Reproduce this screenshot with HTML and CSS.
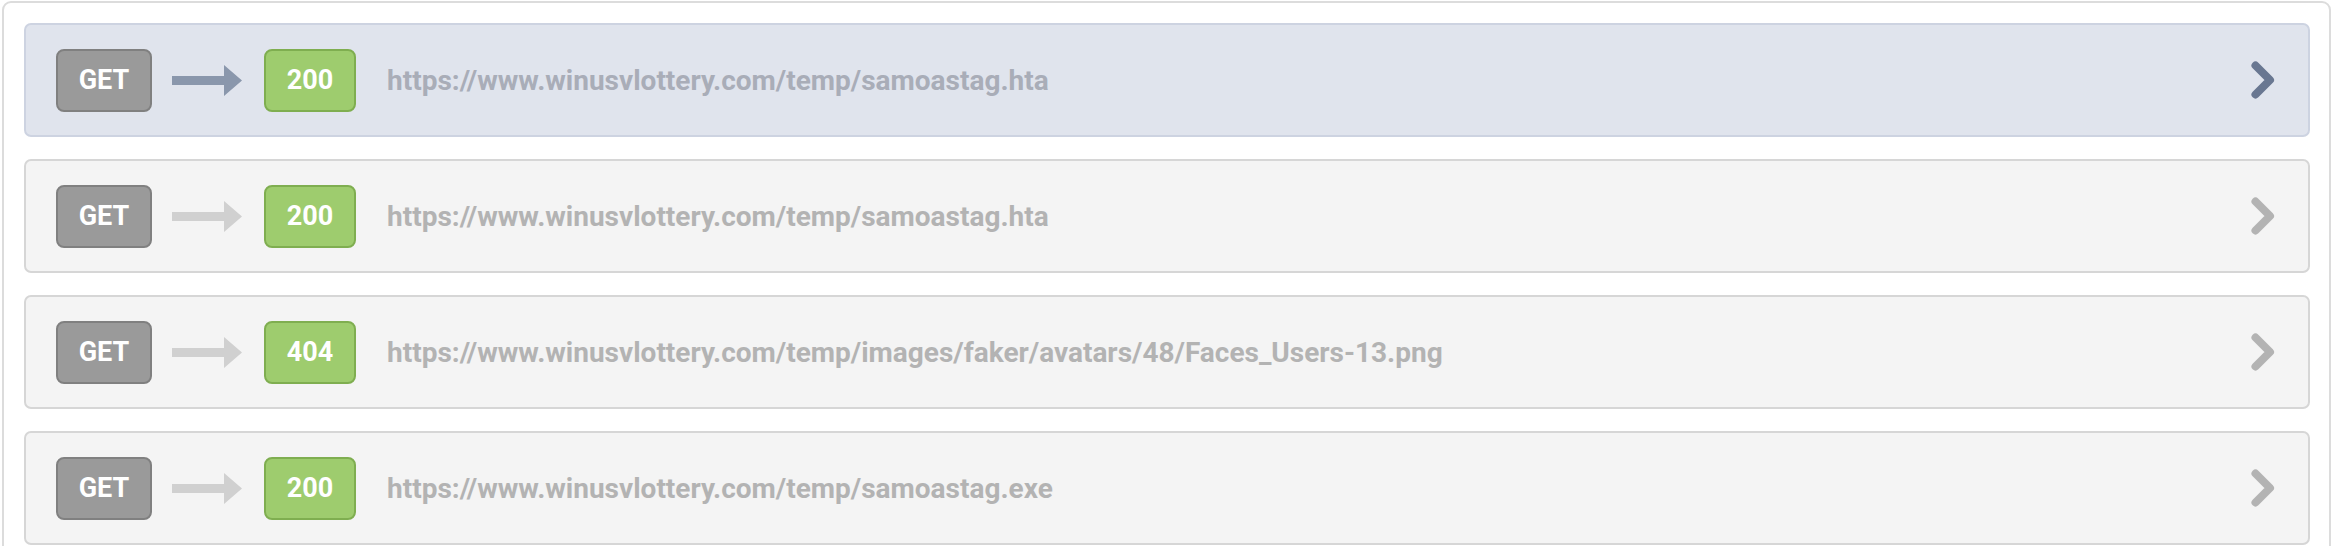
FILE: index.html
```html
<!DOCTYPE html>
<html>
<head>
<meta charset="utf-8">
<link rel="stylesheet" href="styles.css">
</head>
<body>
<div class="panel">
  <div class="row active">
    <span class="method">GET</span>
    <svg class="arrow" width="70" height="31" viewBox="0 0 70 31"><path d="M0 11h52V0l18 15.5L52 31V20H0z"/></svg>
    <span class="status">200</span>
    <span class="url">https://www.winusvlottery.com/temp/samoastag.hta</span>
    <svg class="chev" width="24" height="38" viewBox="0 0 24 38"><path d="M4.5 4.5L19 19L4.5 33.5" fill="none" stroke-width="8" stroke-linecap="round" stroke-linejoin="round"/></svg>
  </div>
  <div class="row">
    <span class="method">GET</span>
    <svg class="arrow" width="70" height="31" viewBox="0 0 70 31"><path d="M0 11h52V0l18 15.5L52 31V20H0z"/></svg>
    <span class="status">200</span>
    <span class="url">https://www.winusvlottery.com/temp/samoastag.hta</span>
    <svg class="chev" width="24" height="38" viewBox="0 0 24 38"><path d="M4.5 4.5L19 19L4.5 33.5" fill="none" stroke-width="8" stroke-linecap="round" stroke-linejoin="round"/></svg>
  </div>
  <div class="row">
    <span class="method">GET</span>
    <svg class="arrow" width="70" height="31" viewBox="0 0 70 31"><path d="M0 11h52V0l18 15.5L52 31V20H0z"/></svg>
    <span class="status">404</span>
    <span class="url">https://www.winusvlottery.com/temp/images/faker/avatars/48/Faces_Users-13.png</span>
    <svg class="chev" width="24" height="38" viewBox="0 0 24 38"><path d="M4.5 4.5L19 19L4.5 33.5" fill="none" stroke-width="8" stroke-linecap="round" stroke-linejoin="round"/></svg>
  </div>
  <div class="row">
    <span class="method">GET</span>
    <svg class="arrow" width="70" height="31" viewBox="0 0 70 31"><path d="M0 11h52V0l18 15.5L52 31V20H0z"/></svg>
    <span class="status">200</span>
    <span class="url">https://www.winusvlottery.com/temp/samoastag.exe</span>
    <svg class="chev" width="24" height="38" viewBox="0 0 24 38"><path d="M4.5 4.5L19 19L4.5 33.5" fill="none" stroke-width="8" stroke-linecap="round" stroke-linejoin="round"/></svg>
  </div>
</div>
</body>
</html>
```
FILE: styles.css
```css
html, body {
  margin: 0;
  padding: 0;
  background: #ffffff;
  overflow: hidden;
}
body {
  font-family: Roboto, "Liberation Sans", sans-serif;
}
.panel {
  margin: 1px 1px 0 2px;
  border: 2px solid #dcdcdc;
  border-radius: 9px;
  padding: 20px 19px 20px 20px;
  display: flex;
  flex-direction: column;
  gap: 22px;
}
.row {
  height: 114px;
  box-sizing: border-box;
  border: 2px solid #d6d6d6;
  border-radius: 7px;
  background: #f4f4f4;
  display: flex;
  align-items: center;
  padding: 0 33px 0 30px;
}
.row.active {
  background: #e0e4ed;
  border-color: #cdd3e1;
}
.method, .status {
  box-sizing: border-box;
  height: 63px;
  border-radius: 8px;
  border: 2px solid;
  display: flex;
  align-items: center;
  justify-content: center;
  color: #ffffff;
  font-weight: 700;
  font-size: 27px;
}
.method {
  width: 96px;
  background: #9a9a9a;
  border-color: #808080;
}
.status {
  width: 92px;
  background: #9ecc6e;
  border-color: #7fae50;
}
.arrow {
  margin: 0 22px 0 20px;
  fill: #d0d0d0;
}
.active .arrow {
  fill: #8a97ac;
}
.url {
  margin-left: 31px;
  flex: 1;
  font-size: 28px;
  font-weight: 700;
  color: #b3b3b3;
}
.active .url {
  color: #a9adb8;
}
.chev {
  stroke: #b3b3b3;
}
.active .chev {
  stroke: #697791;
}
```
